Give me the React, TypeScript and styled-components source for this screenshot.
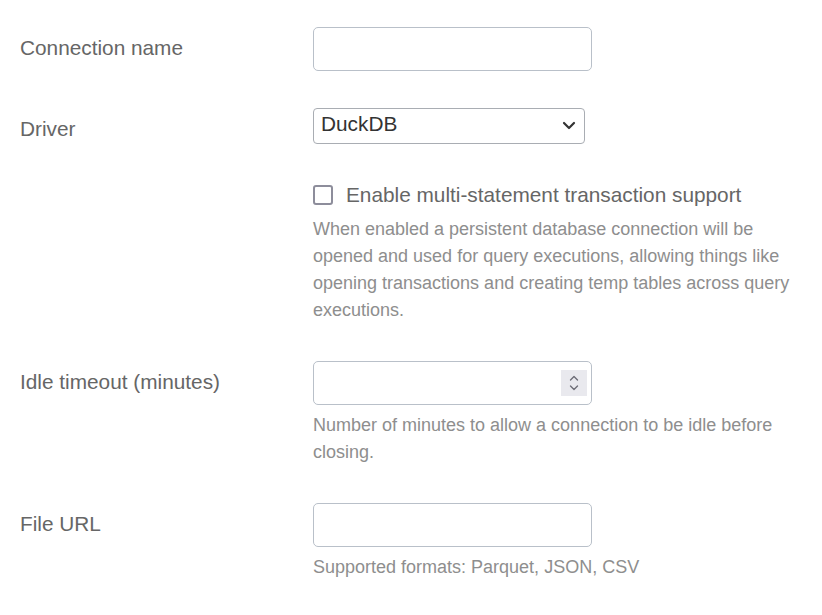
import styled, { createGlobalStyle } from 'styled-components';

const GlobalStyle = createGlobalStyle`
  html, body {
    margin: 0;
    padding: 0;
    background: #ffffff;
    font-family: "Liberation Sans", Arial, sans-serif;
  }
  * { box-sizing: border-box; }
`;

const Form = styled.form`
  display: grid;
  grid-template-columns: 293px 1fr;
  align-items: start;
  row-gap: 37px;
  padding: 27px 20px 0 20px;
`;

const Label = styled.label`
  font-size: 20.8px;
  line-height: 24px;
  padding-top: 9px;
  color: #666666;
`;

const Field = styled.div`
  display: flex;
  flex-direction: column;
  align-items: flex-start;
`;

const TextInput = styled.input`
  width: 279px;
  height: 44px;
  border: 1.5px solid #b9c0c9;
  border-radius: 5px;
  background: #fff;
  padding: 0 10px;
  font: inherit;
  font-size: 20.8px;
  outline: none;
`;

const NumberBox = styled.div`
  width: 279px;
  height: 44px;
  border: 1.5px solid #b9c0c9;
  border-radius: 5px;
  display: flex;
  align-items: center;
  padding: 0 4px 0 10px;
`;

const BareInput = styled.input`
  flex: 1;
  min-width: 0;
  border: none;
  outline: none;
  font: inherit;
  font-size: 20.8px;
  background: transparent;
`;

const Spinner = styled.div`
  width: 26px;
  height: 26px;
  background: #e9e9ee;
  display: flex;
  align-items: center;
  justify-content: center;
`;

const SelectBox = styled.div`
  width: 272px;
  height: 36px;
  border: 1.5px solid #a9adb3;
  border-radius: 4px;
  display: flex;
  align-items: center;
  justify-content: space-between;
  padding: 0 8px 5px 7px;
  font-size: 20.8px;
  color: #333;
`;

const Chevron = styled.svg`
  margin-top: 4px;
`;

const CheckRow = styled.label`
  display: flex;
  align-items: center;
  gap: 13px;
  font-size: 20.8px;
  line-height: 27px;
  color: #666666;
`;

const Box = styled.span`
  width: 20px;
  height: 20px;
  border: 2.5px solid #8d8d9b;
  border-radius: 3px;
  flex: none;
`;

const Help = styled.p<{ $top?: number }>`
  margin: ${({ $top }) => $top ?? 7}px 0 0 0;
  font-size: 18px;
  line-height: 27px;
  color: #8e8e8e;
  max-width: 490px;
`;

export default function App() {
  return (
    <>
      <GlobalStyle />
      <Form>
        <Label>Connection name</Label>
        <Field>
          <TextInput type="text" />
        </Field>

        <Label>Driver</Label>
        <Field>
          <SelectBox>
            <span>DuckDB</span>
            <Chevron width="14" height="9" viewBox="0 0 14 9">
              <path d="M2 2l5 5 5-5" fill="none" stroke="#333" strokeWidth="2.2" strokeLinecap="round" strokeLinejoin="round" />
            </Chevron>
          </SelectBox>
        </Field>

        <span />
        <Field>
          <CheckRow>
            <Box />
            Enable multi-statement transaction support
          </CheckRow>
          <Help $top={8}>
            When enabled a persistent database connection will be opened and used for query executions, allowing things like opening transactions and creating temp tables across query executions.
          </Help>
        </Field>

        <Label>Idle timeout (minutes)</Label>
        <Field>
          <NumberBox>
            <BareInput type="text" />
            <Spinner>
              <svg width="12" height="20" viewBox="0 0 12 20">
                <path d="M2.5 7l3.5-3.5L9.5 7M2.5 13l3.5 3.5 3.5-3.5" fill="none" stroke="#6e6e78" strokeWidth="1.4" strokeLinecap="round" strokeLinejoin="round" />
              </svg>
            </Spinner>
          </NumberBox>
          <Help>Number of minutes to allow a connection to be idle before closing.</Help>
        </Field>

        <Label>File URL</Label>
        <Field>
          <TextInput type="text" />
          <Help>Supported formats: Parquet, JSON, CSV</Help>
        </Field>
      </Form>
    </>
  );
}
